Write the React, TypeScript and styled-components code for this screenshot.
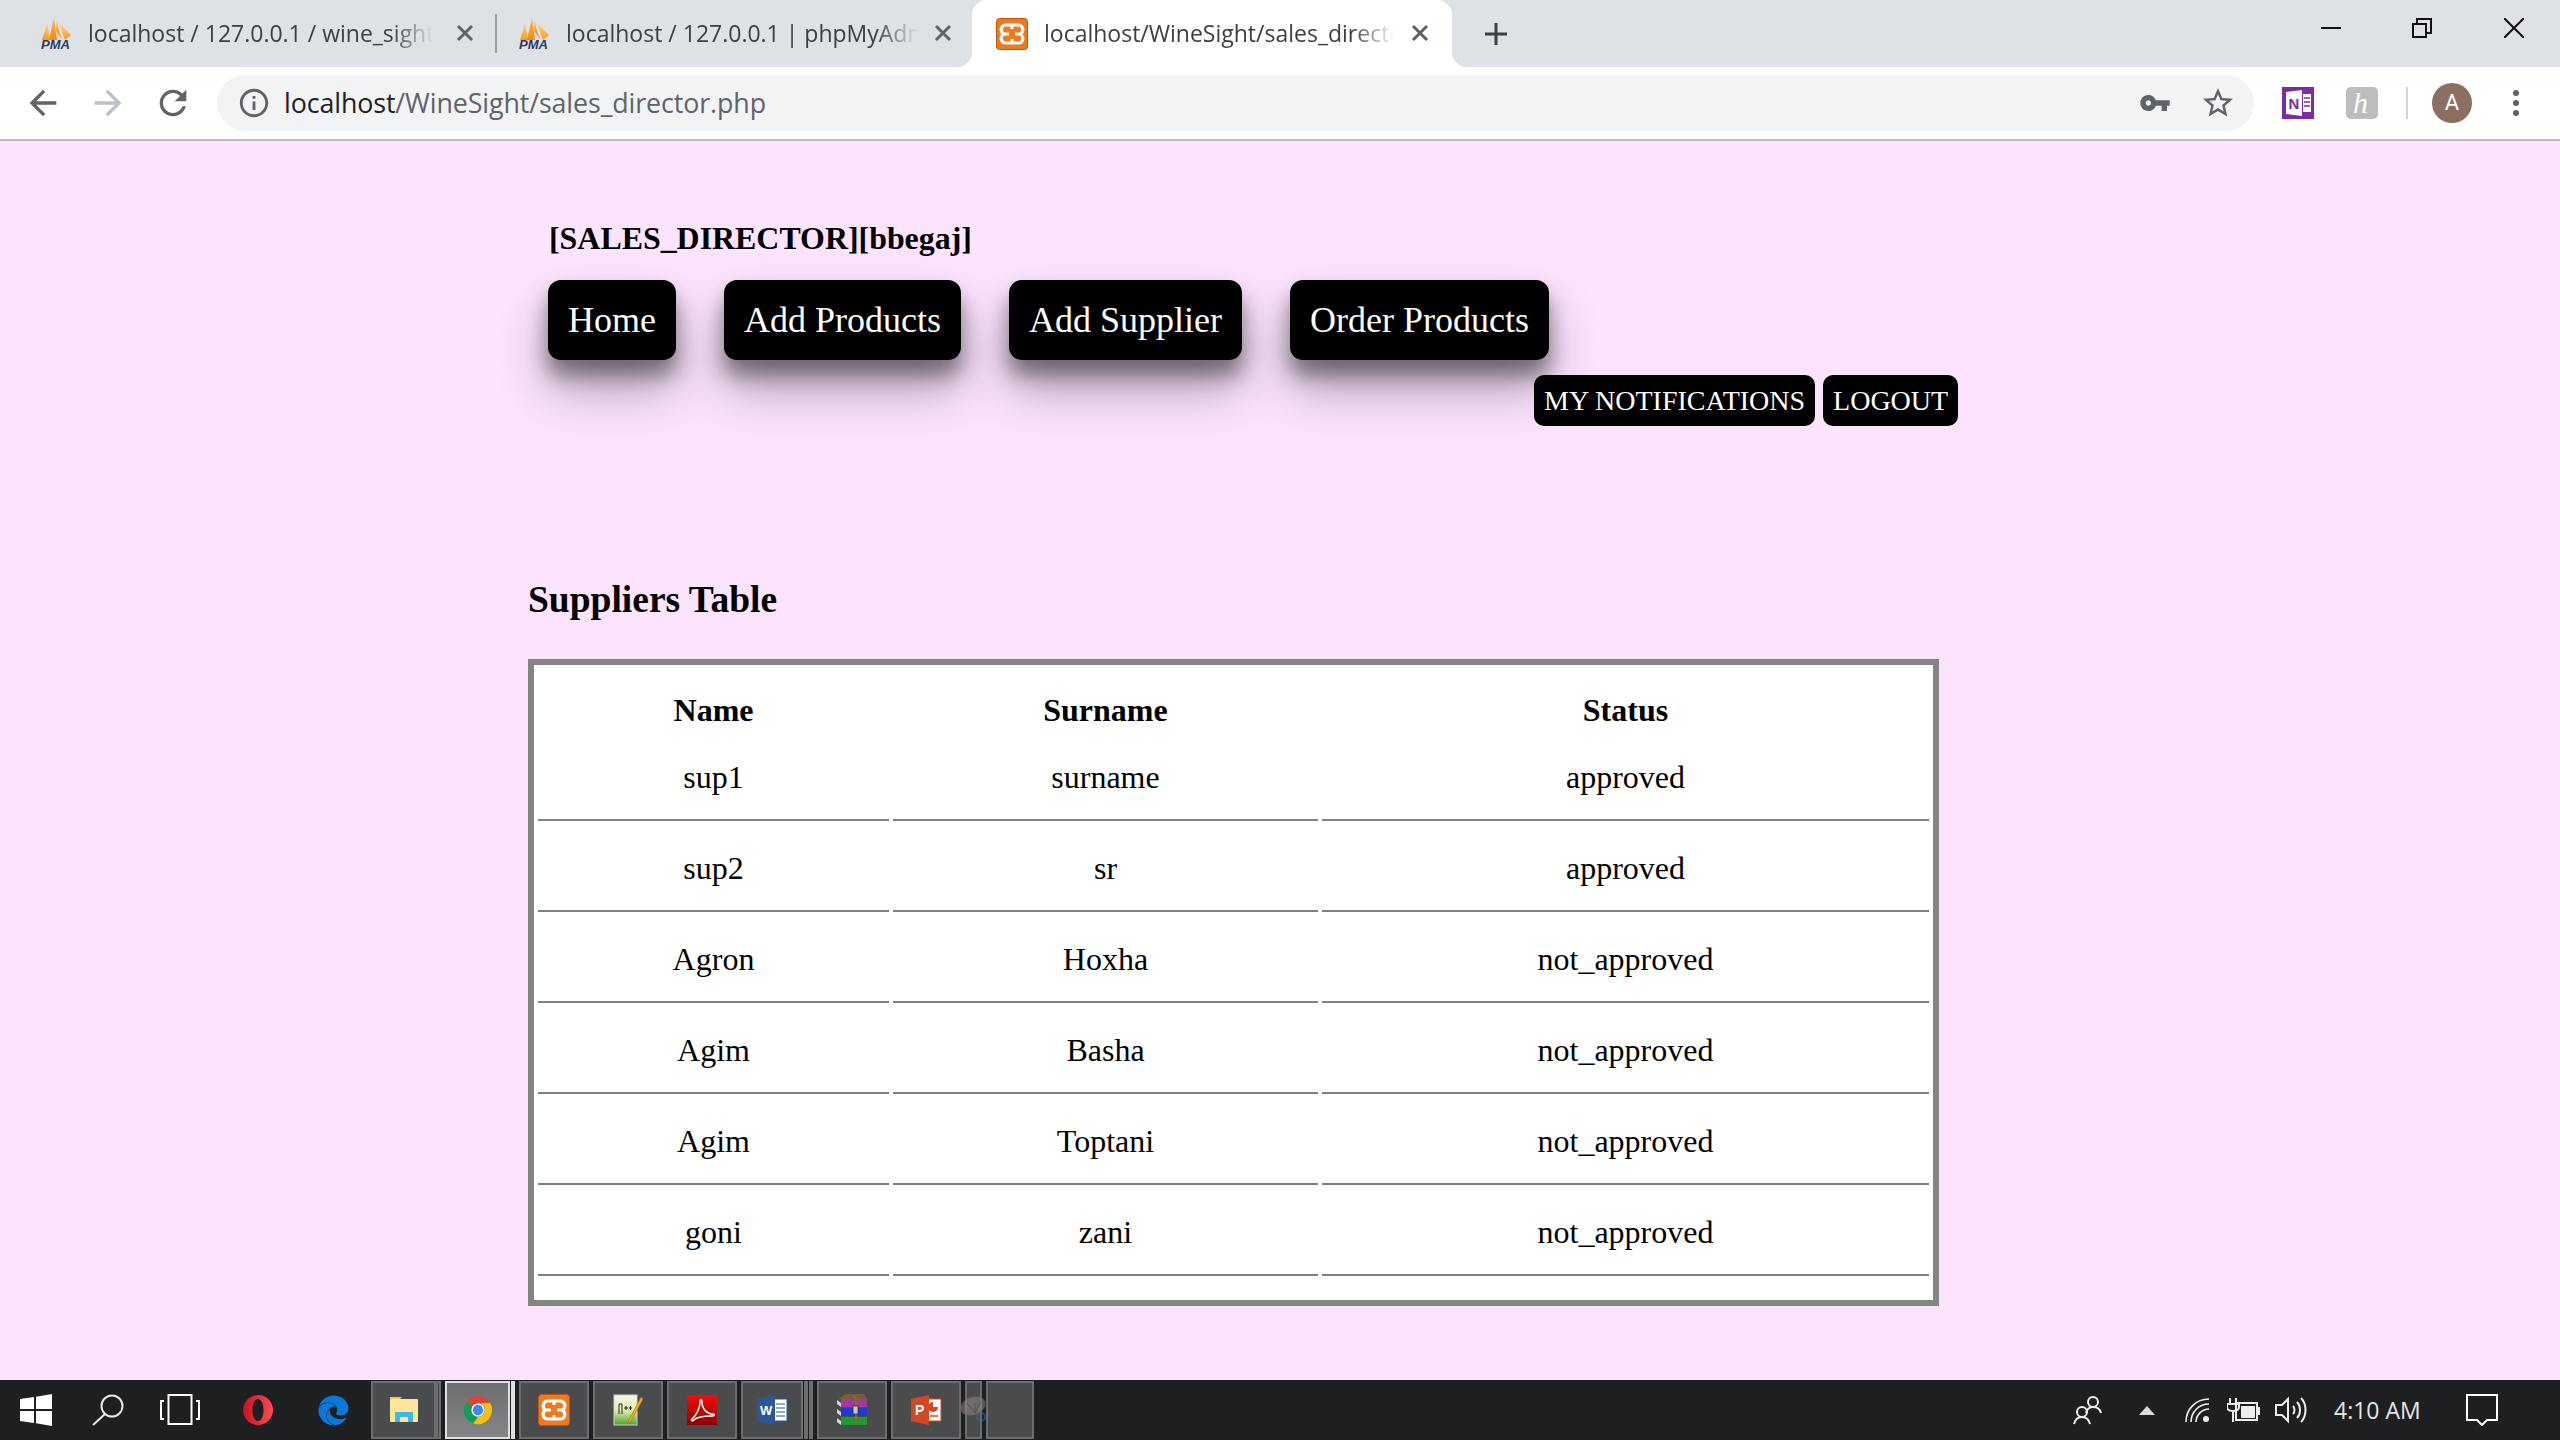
import React from "react";
import styled, { createGlobalStyle } from "styled-components";
import { FaEdge } from "react-icons/fa";

const Global = createGlobalStyle`
  html, body { margin: 0; padding: 0; width: 2560px; height: 1440px; overflow: hidden; background: #fce4fe; }
  #root { width: 2560px; height: 1440px; }
  * { box-sizing: border-box; }
`;

const Screen = styled.div`
  width: 2560px; height: 1440px; display: flex; flex-direction: column; overflow: hidden;
`;

/* ---------- browser chrome ---------- */
const TabStrip = styled.div`
  height: 67px; flex: none; display: flex; background: #dee1e6; align-items: stretch;
`;
const Tab = styled.div<{ $w: number; $pl: number; $active?: boolean }>`
  position: relative; width: ${p => p.$w}px; padding-left: ${p => p.$pl}px;
  display: flex; align-items: center; flex: none;
  background: ${p => (p.$active ? "#fff" : "transparent")};
  border-radius: ${p => (p.$active ? "15px 15px 0 0" : "0")};
  ${p => p.$active && `
    &::before, &::after { content: ""; position: absolute; bottom: 0; width: 15px; height: 15px; }
    &::before { left: -15px; background: radial-gradient(circle at 0 0, transparent 14.5px, #fff 15.5px); }
    &::after { right: -15px; background: radial-gradient(circle at 100% 0, transparent 14.5px, #fff 15.5px); }
  `}
`;
const TabTitle = styled.div<{ $w: number; $ml: number }>`
  width: ${p => p.$w}px; margin-left: ${p => p.$ml}px; margin-top: -2px; overflow: hidden; white-space: nowrap;
  font: 400 23px/32px "Open Sans", sans-serif; color: #3c4043;
  -webkit-mask-image: linear-gradient(to right, #000 88%, transparent 100%);
  mask-image: linear-gradient(to right, #000 88%, transparent 100%);
`;
const TabClose = styled.svg<{ $ml: number }>`
  width: 18px; height: 18px; margin-left: ${p => p.$ml}px; margin-top: -2px; flex: none;
`;
const TabDivider = styled.div`
  width: 2px; height: 39px; background: #9aa0a6; align-self: center; flex: none;
`;
const NewTab = styled.svg`
  width: 24px; height: 24px; margin-left: 32px; align-self: center; flex: none;
`;
const WindowControls = styled.div`
  margin-left: auto; display: flex; align-items: flex-start; padding: 18px 36px 0 0;
`;
const WinIcon = styled.svg<{ $mr?: number }>`
  width: 20px; height: 20px; display: block; margin-right: ${p => p.$mr ?? 0}px;
`;

const Toolbar = styled.div`
  height: 74px; flex: none; background: #fff; border-bottom: 2px solid #bdbdc1;
  display: flex; align-items: center; padding: 0 0 1px 23px;
`;
const NavIcon = styled.svg<{ $mr: number }>`
  width: 40px; height: 40px; margin-right: ${p => p.$mr}px; flex: none; display: block;
`;
const Omnibox = styled.div`
  width: 2037px; height: 56px; border-radius: 28px; background: #f1f3f4; flex: none;
  display: flex; align-items: center; padding: 0 18px 0 20px;
`;
const Glyph = styled.svg<{ $s: number; $ml?: number }>`
  width: ${p => p.$s}px; height: ${p => p.$s}px; margin-left: ${p => p.$ml ?? 0}px; flex: none; display: block; overflow: visible;
`;
const Url = styled.div`
  margin-left: 13px; font: 400 26.8px/40px "Open Sans", sans-serif; color: #5f6368; white-space: nowrap; letter-spacing: -0.1px;
  padding-top: 1px;
`;
const UrlHost = styled.span`
  color: #202124;
`;
const OmniRight = styled.div`
  margin-left: auto; display: flex; align-items: center; gap: 29px;
`;
const ExtSlot = styled.svg<{ $ml: number }>`
  width: 32px; height: 32px; margin-left: ${p => p.$ml}px; flex: none; display: block;
`;
const ToolDivider = styled.div`
  width: 2px; height: 32px; background: #d3d4d6; margin-left: 28px; flex: none;
`;
const Avatar = styled.div`
  width: 40px; height: 40px; border-radius: 50%; background: #8d6e63; color: #fff; margin-left: 24px; flex: none;
  display: flex; align-items: center; justify-content: center; font: 400 22px/1 "Roboto", sans-serif;
`;
const MenuDots = styled.div`
  margin-left: 41px; display: flex; flex-direction: column; gap: 4px; flex: none;
`;
const Dot = styled.span`
  width: 6px; height: 6px; border-radius: 50%; background: #5f6368; display: block;
`;

/* ---------- page ---------- */
const Page = styled.main`
  flex: 1; min-height: 0; background: #fce4fe; padding: 80px 0 0 528px;
  font-family: "Liberation Serif", "Times New Roman", serif; color: #000;
`;
const RoleLine = styled.div`
  margin-left: 21px; font-size: 31.9px; line-height: 36px; font-weight: 700; height: 36px;
`;
const NavRow = styled.nav`
  margin: 23px 0 0 20px; display: flex; gap: 48px;
`;
const NavButton = styled.a`
  height: 80px; padding: 0 20px; display: flex; align-items: center; background: #000; color: #fff;
  border-radius: 13px; font-size: 36px; white-space: nowrap;
  box-shadow: 0 15px 20px rgba(0, 0, 0, 0.4), 0 30px 50px rgba(0, 0, 0, 0.3);
`;
const UserRow = styled.div`
  margin: 15px 0 0 1006px; display: flex; gap: 8px; height: 51px; position: relative;
`;
const UserButton = styled.a`
  height: 51px; padding: 0 10px; display: flex; align-items: center; background: #000; color: #fff;
  border-radius: 10px; font-size: 28px; white-space: nowrap;
`;
const SectionTitle = styled.h2`
  margin: 151px 0 0; font-size: 37.5px; line-height: 46px; font-weight: 700;
`;
const TableFrame = styled.div`
  margin-top: 36px; width: 1411px; border: 6px solid #848484; background: #fff; padding-bottom: 20px;
`;
const Grid = styled.table`
  border-collapse: separate; border-spacing: 4px; table-layout: fixed; width: 1399px;
  font-size: 32px; line-height: 34px;
`;
const Th = styled.th<{ $w: number }>`
  width: ${p => p.$w}px; padding: 24px 0 3px; text-align: center; font-weight: 700;
`;
const Td = styled.td`
  padding: 26px 0 25px; text-align: center; border-bottom: 2px solid #808080;
`;

/* ---------- taskbar ---------- */
const Taskbar = styled.footer`
  height: 60px; flex: none; background: #1d1f21; display: flex; align-items: center;
`;
const Launcher = styled.div<{ $w: number }>`
  width: ${p => p.$w}px; height: 60px; display: flex; align-items: center; justify-content: center; flex: none;
`;
const TaskButton = styled.div<{ $w: number; $gap?: number; $active?: boolean }>`
  width: ${p => p.$w}px; height: 58px; margin-right: ${p => p.$gap ?? 4}px; flex: none;
  display: flex; align-items: center; justify-content: center;
  background: ${p => (p.$active ? "linear-gradient(#6c6d6f, #858687)" : "#4a4b4d")};
  border: 2px solid ${p => (p.$active ? "#e0e0e0" : "#6c6d6f")};
`;
const LauncherGap = styled.div`
  width: 5px; flex: none;
`;
const Tray = styled.div`
  margin-left: auto; padding-right: 62px; display: flex; align-items: center;
`;
const TrayIcon = styled.svg<{ $w: number; $h: number; $ml: number }>`
  width: ${p => p.$w}px; height: ${p => p.$h}px; margin-left: ${p => p.$ml}px; flex: none; display: block;
`;
const Clock = styled.div`
  margin-left: 27px; font: 400 23px/30px "Open Sans", sans-serif; color: #e6e6e6; white-space: nowrap; width: 87px;
`;
const TaskIcon = styled.svg<{ $s: number }>`
  width: ${p => p.$s}px; height: ${p => p.$s}px; flex: none; display: block; overflow: visible;
`;

/* ---------- drawings ---------- */
const PmaIcon = () => (
  <Glyph $s={32} viewBox="0 0 32 32">
    <defs>
      <linearGradient id="pmaA" x1="0" y1="0" x2="0" y2="1">
        <stop offset="0" stopColor="#ffd9a0" />
        <stop offset="1" stopColor="#f79a1e" />
      </linearGradient>
      <linearGradient id="pmaB" x1="0" y1="0" x2="0" y2="1">
        <stop offset="0" stopColor="#ffb347" />
        <stop offset="1" stopColor="#f58a0b" />
      </linearGradient>
    </defs>
    <path d="M2 22 C4 15 6 9 7 4 L10 22 Z" fill="url(#pmaA)" />
    <path d="M9 22 C11 13 13 5 14 0 L17 22 Z" fill="url(#pmaB)" />
    <path d="M17 3 C18 11 20 17 23 22 L16 13 Z" fill="url(#pmaB)" />
    <path d="M18 4 L31 17 L25 22 Z" fill="url(#pmaA)" />
    <text x="1" y="31" fontFamily="Liberation Sans" fontSize="12" fontWeight="700" fontStyle="italic" fill="#2b3a67" textLength="29" lengthAdjust="spacingAndGlyphs">PMA</text>
  </Glyph>
);

const XamppMark = () => (
  <g>
    <rect x="0.5" y="0.5" width="31" height="31" rx="3" fill="#ef7a1f" stroke="#b9570f" />
    <path d="M10 7 H22 C27 7 28.5 13 24.5 16 C28.5 19 27 25 22 25 H10 C5 25 3.500 19 7.500 16 C3.500 13 5 7 10 7 Z" fill="none" stroke="#fff" strokeWidth="3.2" />
    <path d="M8 16 H13 M19 16 H24 M16 7 V11 M16 21 V25" stroke="#fff" strokeWidth="3" />
  </g>
);

const ChromeMark = () => (
  <g>
    <path d="M16 1 A15 15 0 0 1 29 8.500 L16 8.500 A7.500 7.500 0 0 0 9.500 12.300 L3.500 7.500 A15 15 0 0 1 16 1 Z" fill="#db4437" />
    <path d="M3.500 7.500 L9.500 12.300 A7.500 7.500 0 0 0 16 23.500 L11 30.200 A15 15 0 0 1 3.500 7.500 Z" fill="#0f9d58" />
    <path d="M29 8.500 A15 15 0 0 1 11 30.200 L16 23.500 A7.500 7.500 0 0 0 16 8.500 Z" fill="#f4c20d" />
    <circle cx="16" cy="16" r="7" fill="#fff" />
    <circle cx="16" cy="16" r="5.500" fill="#4285f4" />
  </g>
);

const CloseX = ({ ml }: { ml: number }) => (
  <TabClose $ml={ml} viewBox="0 0 18 18">
    <path d="M2 2 L16 16 M16 2 L2 16" stroke="#5f6368" strokeWidth="3" />
  </TabClose>
);

const rows = [
  ["sup1", "surname", "approved"],
  ["sup2", "sr", "approved"],
  ["Agron", "Hoxha", "not_approved"],
  ["Agim", "Basha", "not_approved"],
  ["Agim", "Toptani", "not_approved"],
  ["goni", "zani", "not_approved"],
];

export default function App() {
  return (
    <Screen>
      <Global />
      <TabStrip>
        <Tab $w={495} $pl={40}>
          <PmaIcon />
          <TabTitle $w={345} $ml={16}>localhost / 127.0.0.1 / wine_sight</TabTitle>
          <CloseX ml={23} />
        </Tab>
        <TabDivider />
        <Tab $w={475} $pl={21}>
          <PmaIcon />
          <TabTitle $w={352} $ml={16}>localhost / 127.0.0.1 | phpMyAdmin</TabTitle>
          <CloseX ml={16} />
        </Tab>
        <Tab $w={480} $pl={24} $active>
          <Glyph $s={32} viewBox="0 0 32 32"><XamppMark /></Glyph>
          <TabTitle $w={350} $ml={16}>localhost/WineSight/sales_director.php</TabTitle>
          <CloseX ml={17} />
        </Tab>
        <NewTab viewBox="0 0 24 24">
          <path d="M12 1 V23 M1 12 H23" stroke="#3c4043" strokeWidth="3" />
        </NewTab>
        <WindowControls>
          <WinIcon $mr={71} viewBox="0 0 20 20"><path d="M0 10 H20" stroke="#111" strokeWidth="2" /></WinIcon>
          <WinIcon $mr={72} viewBox="0 0 20 20">
            <path d="M1 6 H14 V19 H1 Z M5 6 V1 H19 V15 H14" fill="none" stroke="#111" strokeWidth="2" />
          </WinIcon>
          <WinIcon viewBox="0 0 20 20"><path d="M0 0 L20 20 M20 0 L0 20" stroke="#111" strokeWidth="2" /></WinIcon>
        </WindowControls>
      </TabStrip>

      <Toolbar>
        <NavIcon $mr={25} viewBox="0 0 24 24"><path fill="#5f6368" d="M20 11H7.830l5.590-5.590L12 4l-8 8 8 8 1.410-1.410L7.830 13H20v-2z" /></NavIcon>
        <NavIcon $mr={25} viewBox="0 0 24 24"><path fill="#bdc1c6" d="M4 11h12.170l-5.590-5.590L12 4l8 8-8 8-1.410-1.410L16.170 13H4v-2z" /></NavIcon>
        <NavIcon $mr={24} viewBox="0 0 24 24"><path fill="#5f6368" d="M17.650 6.350C16.200 4.900 14.210 4 12 4c-4.420 0-7.990 3.580-7.990 8s3.570 8 7.990 8c3.730 0 6.840-2.550 7.730-6h-2.080c-.82 2.330-3.040 4-5.650 4-3.310 0-6-2.690-6-6s2.690-6 6-6c1.660 0 3.140.69 4.220 1.780L13 11h7V4l-2.350 2.350z" /></NavIcon>
        <Omnibox>
          <Glyph $s={34} viewBox="0 0 24 24"><path fill="#5f6368" d="M11 7h2v2h-2zm0 4h2v6h-2zm1-9C6.480 2 2 6.480 2 12s4.480 10 10 10 10-4.480 10-10S17.520 2 12 2zm0 18c-4.410 0-8-3.590-8-8s3.590-8 8-8 8 3.590 8 8-3.590 8-8 8z" /></Glyph>
          <Url><UrlHost>localhost</UrlHost>/WineSight/sales_director.php</Url>
          <OmniRight>
            <Glyph $s={32} viewBox="0 0 24 24"><path fill="#5f6368" d="M12.650 10C11.830 7.670 9.610 6 7 6c-3.310 0-6 2.690-6 6s2.690 6 6 6c2.610 0 4.830-1.670 5.650-4H17v4h4v-4h2v-4H12.650zM7 14c-1.100 0-2-.9-2-2s.9-2 2-2 2 .9 2 2-.9 2-2 2z" /></Glyph>
            <Glyph $s={36} viewBox="0 0 24 24"><path fill="#5f6368" d="M22 9.240l-7.190-.62L12 2 9.190 8.630 2 9.240l5.460 4.730L5.820 21 12 17.270 18.180 21l-1.630-7.030L22 9.240zM12 15.400l-3.760 2.270 1-4.280-3.320-2.880 4.380-.38L12 6.100l1.710 4.040 4.380.38-3.320 2.880 1 4.280L12 15.400z" /></Glyph>
          </OmniRight>
        </Omnibox>
        <ExtSlot $ml={28} viewBox="0 0 32 32">
          <rect width="32" height="32" fill="#7b2ba3" />
          <path d="M4 5 L20 3 V29 L4 27 Z" fill="#fff" />
          <rect x="21" y="7" width="8" height="18" fill="#fff" />
          <path d="M22 11 H28 M22 15 H28 M22 19 H28" stroke="#7b2ba3" strokeWidth="1.500" />
          <text x="6.500" y="22" fontFamily="Liberation Sans" fontSize="15" fontWeight="700" fill="#7b2ba3">N</text>
        </ExtSlot>
        <ExtSlot $ml={32} viewBox="0 0 32 32">
          <rect width="32" height="32" rx="5" fill="#bdbdbd" />
          <text x="7" y="26" fontFamily="Liberation Serif" fontSize="30" fontStyle="italic" fill="#fff">h</text>
        </ExtSlot>
        <ToolDivider />
        <Avatar>A</Avatar>
        <MenuDots><Dot /><Dot /><Dot /></MenuDots>
      </Toolbar>

      <Page>
        <RoleLine>[SALES_DIRECTOR][bbegaj]</RoleLine>
        <NavRow>
          <NavButton>Home</NavButton>
          <NavButton>Add Products</NavButton>
          <NavButton>Add Supplier</NavButton>
          <NavButton>Order Products</NavButton>
        </NavRow>
        <UserRow>
          <UserButton>MY NOTIFICATIONS</UserButton>
          <UserButton>LOGOUT</UserButton>
        </UserRow>
        <SectionTitle>Suppliers Table</SectionTitle>
        <TableFrame>
          <Grid>
            <thead>
              <tr>
                <Th $w={351}>Name</Th>
                <Th $w={425}>Surname</Th>
                <Th $w={607}>Status</Th>
              </tr>
            </thead>
            <tbody>
              {rows.map((r, i) => (
                <tr key={i}>
                  <Td>{r[0]}</Td>
                  <Td>{r[1]}</Td>
                  <Td>{r[2]}</Td>
                </tr>
              ))}
            </tbody>
          </Grid>
        </TableFrame>
      </Page>

      <Taskbar>
        <Launcher $w={72}>
          <TaskIcon $s={32} viewBox="0 0 32 32">
            <path d="M0 5 L14 3 V15 H0 Z M16 2.700 L32 0 V15 H16 Z M0 17 H14 V29 L0 27 Z M16 17 H32 V32 L16 29.300 Z" fill="#fff" />
          </TaskIcon>
        </Launcher>
        <Launcher $w={72}>
          <TaskIcon $s={32} viewBox="0 0 32 32">
            <circle cx="20" cy="12" r="10.500" fill="none" stroke="#e8e8e8" strokeWidth="2" />
            <path d="M13 20 L1 31" stroke="#e8e8e8" strokeWidth="2" />
          </TaskIcon>
        </Launcher>
        <Launcher $w={72}>
          <TaskIcon $s={40} viewBox="0 0 40 40">
            <path d="M10 4 H33 V33 H10 Z" transform="translate(-1.500 1)" fill="none" stroke="#fff" strokeWidth="2" />
            <path d="M4 11 H1 V29 H4 M36 11 H39 V29 H36" fill="none" stroke="#fff" strokeWidth="2" />
          </TaskIcon>
        </Launcher>
        <Launcher $w={84}>
          <TaskIcon $s={30} viewBox="0 0 30 30">
            <defs>
              <linearGradient id="op" x1="0" y1="0" x2="1" y2="0">
                <stop offset="0" stopColor="#c3121f" />
                <stop offset="1" stopColor="#ff4b55" />
              </linearGradient>
            </defs>
            <path fillRule="evenodd" d="M15 0 C23.300 0 30 6.700 30 15 C30 23.300 23.300 30 15 30 C6.700 30 0 23.300 0 15 C0 6.700 6.700 0 15 0 Z M15 4 C11.500 4 9.500 9 9.500 15 C9.500 21 11.500 26 15 26 C18.500 26 20.500 21 20.500 15 C20.500 9 18.500 4 15 4 Z" fill="url(#op)" />
          </TaskIcon>
        </Launcher>
        <Launcher $w={66}>
          <FaEdge size={31} color="#0a78d6" />
        </Launcher>
        <LauncherGap />

        <TaskButton $w={65} $gap={0}>
          <TaskIcon $s={28} viewBox="0 0 28 28">
            <path d="M0 3 H10 L12 1 H0 Z" fill="#f6c945" />
            <rect x="0" y="3" width="28" height="23" rx="1" fill="#ffe69b" />
            <path d="M5 26 V16 H23 V26 H18 V21 H10 V26 Z" fill="#3db7e9" />
          </TaskIcon>
        </TaskButton>
        <TaskButton $w={5} />
        <TaskButton $w={65} $gap={1} $active>
          <TaskIcon $s={30} viewBox="0 0 32 32"><ChromeMark /></TaskIcon>
        </TaskButton>
        <TaskButton $w={4} $active />
        <TaskButton $w={70}>
          <TaskIcon $s={32} viewBox="0 0 32 32"><XamppMark /></TaskIcon>
        </TaskButton>
        <TaskButton $w={70}>
          <TaskIcon $s={32} viewBox="0 0 32 32">
            <defs>
              <linearGradient id="npp" x1="0" y1="0" x2="0" y2="1">
                <stop offset="0" stopColor="#f5f7e8" />
                <stop offset="0.5" stopColor="#dfeeb0" />
                <stop offset="1" stopColor="#4ea32c" />
              </linearGradient>
            </defs>
            <rect x="2" y="1" width="23" height="30" fill="url(#npp)" stroke="#d0d0d0" />
            <path d="M7 20 V10 H10 V20 M12 14 H16 M14 12 V16 M17 14 H20 M18.500 12 V16" fill="none" stroke="#222" strokeWidth="1" />
            <path d="M29 3 L17 26 L16 30 L19 27 L31 5 Z" fill="#f1a91f" stroke="#9c6b10" strokeWidth="0.500" />
          </TaskIcon>
        </TaskButton>
        <TaskButton $w={70}>
          <TaskIcon $s={30} viewBox="0 0 30 30">
            <defs>
              <linearGradient id="pdf" x1="0" y1="0" x2="0" y2="1">
                <stop offset="0" stopColor="#f40f02" />
                <stop offset="1" stopColor="#8e0000" />
              </linearGradient>
            </defs>
            <rect width="30" height="30" fill="url(#pdf)" />
            <path d="M5 24 C9 21 13 13 13 7 C13 4 15 4 15 7 C15 14 20 19 26 19 C28 19 28 21 25 21 C18 21 10 22 7 25 C5 27 4 25 5 24 Z" fill="none" stroke="#fff" strokeWidth="1.500" />
          </TaskIcon>
        </TaskButton>
        <TaskButton $w={62} $gap={1}>
          <TaskIcon $s={30} viewBox="0 0 30 30">
            <rect x="14" y="4" width="16" height="22" fill="#fff" stroke="#2b579a" />
            <path d="M19 9 H28 M19 13 H28 M19 17 H28 M19 21 H28" stroke="#2b579a" strokeWidth="1.200" />
            <path d="M0 4 L18 0 V30 L0 26 Z" fill="#2b579a" />
            <text x="3" y="20" fontFamily="Liberation Sans" fontSize="13" fontWeight="700" fill="#fff">W</text>
          </TaskIcon>
        </TaskButton>
        <TaskButton $w={3} $gap={1} />
        <TaskButton $w={3} />
        <TaskButton $w={70}>
          <TaskIcon $s={32} viewBox="0 0 32 32">
            <path d="M2 5 L9 0 H28 L31 5 Z" fill="#7b5a3a" />
            <rect x="5" y="5" width="26" height="8" fill="#a03aa0" />
            <rect x="5" y="14" width="26" height="8" fill="#1d3bd0" />
            <rect x="5" y="23" width="26" height="8" fill="#1f9a2e" />
            <path d="M1 6 L5 9 V13 L1 10 Z M1 15 L5 18 V22 L1 19 Z M1 24 L5 27 V31 L1 28 Z" fill="#d8d8d8" />
            <path d="M17 1 L20 5 V31" stroke="#8a6a2a" strokeWidth="2" fill="none" />
            <rect x="17" y="12" width="5" height="8" fill="#c9c9b0" stroke="#333" strokeWidth="0.800" />
          </TaskIcon>
        </TaskButton>
        <TaskButton $w={70}>
          <TaskIcon $s={30} viewBox="0 0 30 30">
            <rect x="14" y="4" width="16" height="22" fill="#fff" stroke="#d24726" />
            <path d="M19 21 H27" stroke="#d24726" strokeWidth="1.500" />
            <path d="M22 7 A5 5 0 1 0 27 12 H22 Z" fill="#d24726" />
            <path d="M0 4 L18 0 V30 L0 26 Z" fill="#d24726" />
            <text x="4" y="20" fontFamily="Liberation Sans" fontSize="14" fontWeight="700" fill="#fff">P</text>
          </TaskIcon>
        </TaskButton>
        <TaskButton $w={17}>
          <TaskIcon $s={30} viewBox="0 0 30 30" opacity={0.55}>
            <ellipse cx="14" cy="11" rx="13" ry="9" transform="rotate(-20 14 11)" fill="#8a8a8a" stroke="#a03a3a" strokeOpacity="0.500" />
            <path d="M8 8 L16 18 L22 6 M16 18 L16 8" stroke="#5a5a5a" fill="none" />
            <circle cx="22" cy="22" r="4" fill="none" stroke="#2f6f9e" strokeWidth="2" />
          </TaskIcon>
        </TaskButton>
        <TaskButton $w={48} />

        <Tray>
          <TrayIcon $w={29} $h={30} $ml={0} viewBox="0 0 29 30">
            <g fill="none" stroke="#eee" strokeWidth="2">
              <circle cx="20" cy="7" r="5" />
              <path d="M13 18 C14 14 17 12 20 12 C24 12 27 14 28 18" />
              <circle cx="9" cy="17" r="5" />
              <path d="M1 29 C2 25 5 22 9 22 C13 22 16 25 17 29" />
            </g>
          </TrayIcon>
          <TrayIcon $w={16} $h={9} $ml={37} viewBox="0 0 16 9"><path d="M8 0 L16 9 H0 Z" fill="#dcdcdc" /></TrayIcon>
          <TrayIcon $w={24} $h={24} $ml={30} viewBox="0 0 24 24">
            <g fill="none" stroke="#eee" strokeWidth="1.600">
              <path d="M1 24 C1 11 11 1 24 1" />
              <path d="M6 24 C6 14 14 6 24 6" />
              <path d="M11 24 C11 17 17 11 24 11" />
            </g>
            <circle cx="21" cy="21" r="3" fill="#eee" />
          </TrayIcon>
          <TrayIcon $w={33} $h={24} $ml={18} viewBox="0 0 33 24">
            <path d="M3 0 V6 M9 0 V6 M0 6 H12 V9 C12 12 9 13 6 13 C3 13 0 12 0 9 Z M6 13 V24" fill="none" stroke="#eee" strokeWidth="2" />
            <rect x="9" y="6" width="21" height="17" fill="none" stroke="#eee" strokeWidth="2" transform="translate(0 -1)" />
            <rect x="14" y="8" width="14" height="12" fill="#eee" />
            <rect x="31" y="9" width="2" height="8" fill="#eee" />
          </TrayIcon>
          <TrayIcon $w={32} $h={28} $ml={15} viewBox="0 0 32 28">
            <g fill="none" stroke="#eee" strokeWidth="2">
              <path d="M1 9 H7 L13 3 V25 L7 19 H1 Z" />
              <path d="M18 10 C20 12 20 16 18 18" />
              <path d="M22 6 C26 10 26 18 22 22" />
              <path d="M26 2 C32 8 32 20 26 26" />
            </g>
          </TrayIcon>
          <Clock>4:10 AM</Clock>
          <TrayIcon $w={32} $h={32} $ml={45} viewBox="0 0 32 32">
            <path d="M1 1 H31 V26 H21 L16 31 L11 26 H1 Z" fill="none" stroke="#fff" strokeWidth="2" />
          </TrayIcon>
        </Tray>
      </Taskbar>
    </Screen>
  );
}
